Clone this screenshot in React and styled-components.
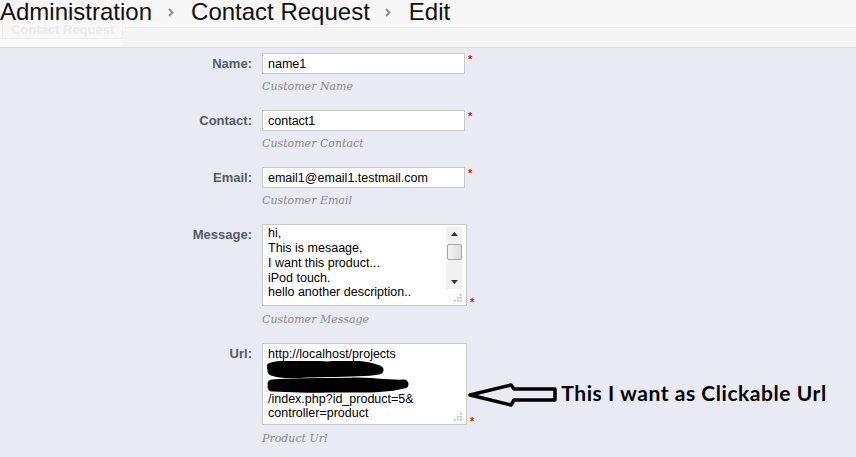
import styled, { createGlobalStyle } from "styled-components";

const GlobalStyle = createGlobalStyle`
  html, body {
    margin: 0;
    padding: 0;
    background: #e9ebf4;
    overflow: hidden;
  }
  body {
    font-family: "Liberation Sans", Arial, sans-serif;
  }
`;

const Page = styled.div`
  width: 856px;
  height: 457px;
  background: #e9ebf4;
`;

const Header = styled.header`
  height: 47px;
  background: #f7f7f7;
  border-bottom: 1px solid #dcdcdc;
`;

const Breadcrumb = styled.nav`
  position: relative;
  z-index: 1;
  height: 22px;
  display: flex;
  align-items: flex-start;
  font-size: 24px;
  line-height: 24px;
  color: #111;
  white-space: nowrap;
`;

const Crumb = styled.span``;

const Sep = styled.span`
  width: 39px;
  display: flex;
  justify-content: center;
  padding: 8px 2px 0 0;
  box-sizing: border-box;
  svg {
    display: block;
  }
`;

const TitleRow = styled.div`
  display: flex;
  align-items: flex-start;
  background: #f9f9f9;
`;

const Tab = styled.div`
  margin-left: 2px;
  height: 16px;
  padding: 0 8px;
  border: 1px solid #efefef;
  border-top: none;
  font-size: 13px;
  font-weight: bold;
  line-height: 15px;
  color: #ececec;
  background: #f8f8f8;
`;

const Rule = styled.div`
  flex: 1;
  margin-top: 5px;
  border-top: 1px solid #ececec;
  height: 19px;
  background: #f5f5f5;
`;

const Form = styled.form`
  padding-top: 5px;
`;

const Row = styled.div`
  display: grid;
  grid-template-columns: 252px auto;
  column-gap: 10px;
  margin-bottom: 15px;
`;

const Label = styled.label`
  text-align: right;
  font-size: 13px;
  font-weight: bold;
  line-height: 21px;
  color: #565b62;
`;

const FieldLine = styled.div`
  display: flex;
  align-items: ${(p) => (p.$multi ? "flex-end" : "flex-start")};
`;

const Input = styled.input`
  box-sizing: border-box;
  width: 203px;
  height: 21px;
  margin: 0;
  padding: 0 5px;
  border: 1px solid #c9c9c9;
  background: #fff;
  font-family: "Liberation Sans", Arial, sans-serif;
  font-size: 12.5px;
  color: #000;
  outline: none;
`;

const Star = styled.span`
  margin-left: 3px;
  font-size: 11px;
  line-height: ${(p) => (p.$multi ? "8px" : "12px")};
  color: #e01010;
  font-weight: bold;
`;

const Box = styled.div`
  position: relative;
  box-sizing: border-box;
  width: 205px;
  height: 82px;
  border: 1px solid #c9c9c9;
  background: #fff;
  display: flex;
`;

const Text = styled.div`
  flex: 1;
  padding: ${(p) => p.$top}px 5px 0;
  font-size: 12.5px;
  line-height: 14.85px;
  color: #000;
  white-space: pre;
  overflow: hidden;
`;

const Scrollbar = styled.div`
  width: 16px;
  margin: 2px 4px 0 0;
  height: 62px;
  background: #f1f1f1;
  display: flex;
  flex-direction: column;
  align-items: center;
`;

const Arrow = styled.div`
  height: 14px;
  display: flex;
  align-items: center;
  justify-content: center;
`;

const Thumb = styled.div`
  box-sizing: border-box;
  width: 15px;
  height: 16px;
  margin-top: 3px;
  border: 1px solid #a8a8a8;
  border-radius: 2px;
  background: linear-gradient(to right, #f4f4f4, #dcdcdc);
`;

const Track = styled.div`
  flex: 1;
`;

const Grip = styled.svg`
  position: absolute;
  right: 4px;
  bottom: 3px;
`;

const Scribble = styled.svg`
  position: absolute;
  left: 4px;
  top: 17px;
`;

const Help = styled.div`
  margin-top: ${(p) => (p.$multi ? 6 : 5)}px;
  font-family: "DejaVu Serif", Georgia, serif;
  font-style: italic;
  font-size: 11px;
  line-height: 16px;
  color: #8a8a8a;
`;

const UrlLine = styled.div`
  display: flex;
  align-items: flex-end;
`;

const Note = styled.div`
  display: flex;
  align-items: center;
  gap: 4px;
  margin: 0 0 16px -6px;
`;

const NoteText = styled.span`
  padding-bottom: 4px;
  font-family: Lato, "Open Sans", sans-serif;
  font-weight: bold;
  font-size: 21px;
  letter-spacing: 0.55px;
  line-height: 24px;
  color: #000;
  white-space: nowrap;
`;

const Chevron = () => (
  <svg width="6" height="9" viewBox="0 0 6 9">
    <path d="M1 1 L4.5 4.5 L1 8" fill="none" stroke="#8c8c8c" strokeWidth="2" />
  </svg>
);

const GripIcon = () => (
  <Grip width="9" height="9" viewBox="0 0 9 9">
    {[
      [7, 1],
      [4, 4],
      [7, 4],
      [1, 7],
      [4, 7],
      [7, 7],
    ].map(([x, y]) => (
      <rect key={`${x}-${y}`} x={x} y={y} width="1.6" height="1.6" fill="#b8b8b8" />
    ))}
  </Grip>
);

const fields = [
  { label: "Name", value: "name1", help: "Customer Name" },
  { label: "Contact", value: "contact1", help: "Customer Contact" },
  { label: "Email", value: "email1@email1.testmail.com", help: "Customer Email" },
];

const message = "hi,\nThis is mesaage,\nI want this product...\niPod touch.\nhello another description..";
const url = "http://localhost/projects\n\n\n/index.php?id_product=5&\ncontroller=product";

export default function App() {
  return (
    <Page>
      <GlobalStyle />
      <Header>
        <Breadcrumb>
          <Crumb>Administration</Crumb>
          <Sep>
            <Chevron />
          </Sep>
          <Crumb>Contact Request</Crumb>
          <Sep>
            <Chevron />
          </Sep>
          <Crumb>Edit</Crumb>
        </Breadcrumb>
        <TitleRow>
          <Tab>Contact Request</Tab>
          <Rule />
        </TitleRow>
      </Header>

      <Form>
        {fields.map((f) => (
          <Row key={f.label}>
            <Label>{f.label}:</Label>
            <div>
              <FieldLine>
                <Input defaultValue={f.value} readOnly />
                <Star>*</Star>
              </FieldLine>
              <Help>{f.help}</Help>
            </div>
          </Row>
        ))}

        <Row>
          <Label>Message:</Label>
          <div>
            <FieldLine $multi>
              <Box>
                <Text $top={1}>{message}</Text>
                <Scrollbar>
                  <Arrow>
                    <svg width="7" height="4" viewBox="0 0 7 4">
                      <path d="M0 4 L3.5 0 L7 4 Z" fill="#333" />
                    </svg>
                  </Arrow>
                  <Thumb />
                  <Track />
                  <Arrow>
                    <svg width="7" height="4" viewBox="0 0 7 4">
                      <path d="M0 0 L3.5 4 L7 0 Z" fill="#333" />
                    </svg>
                  </Arrow>
                </Scrollbar>
                <GripIcon />
              </Box>
              <Star $multi>*</Star>
            </FieldLine>
            <Help $multi>Customer Message</Help>
          </div>
        </Row>

        <Row>
          <Label>Url:</Label>
          <div>
            <UrlLine>
              <FieldLine $multi>
                <Box>
                  <Text $top={3}>{url}</Text>
                  <Scribble width="145" height="36" viewBox="0 0 145 36">
                    <path
                      d="M4 6 C20 2, 40 4, 60 5 C80 3, 100 4, 112 9 C100 12, 70 11, 40 12 C25 13, 10 12, 5 10"
                      fill="none"
                      stroke="#000"
                      strokeWidth="9"
                      strokeLinecap="round"
                      strokeLinejoin="round"
                    />
                    <path
                      d="M5 23 C30 21, 60 22, 85 21 C100 20, 120 24, 137 23 C120 28, 90 27, 60 27 C35 28, 15 26, 5 26"
                      fill="none"
                      stroke="#000"
                      strokeWidth="9"
                      strokeLinecap="round"
                      strokeLinejoin="round"
                    />
                  </Scribble>
                  <GripIcon />
                </Box>
                <Star $multi>*</Star>
              </FieldLine>
              <Note>
                <svg width="89" height="24" viewBox="0 0 89 24">
                  <path
                    d="M2 12 L43 2 L46 6 L87 6 L87 17 L46 17 L43 22 Z"
                    fill="none"
                    stroke="#000"
                    strokeWidth="3.5"
                    strokeLinejoin="round"
                  />
                </svg>
                <NoteText>This I want as Clickable Url</NoteText>
              </Note>
            </UrlLine>
            <Help $multi>Product Url</Help>
          </div>
        </Row>
      </Form>
    </Page>
  );
}
